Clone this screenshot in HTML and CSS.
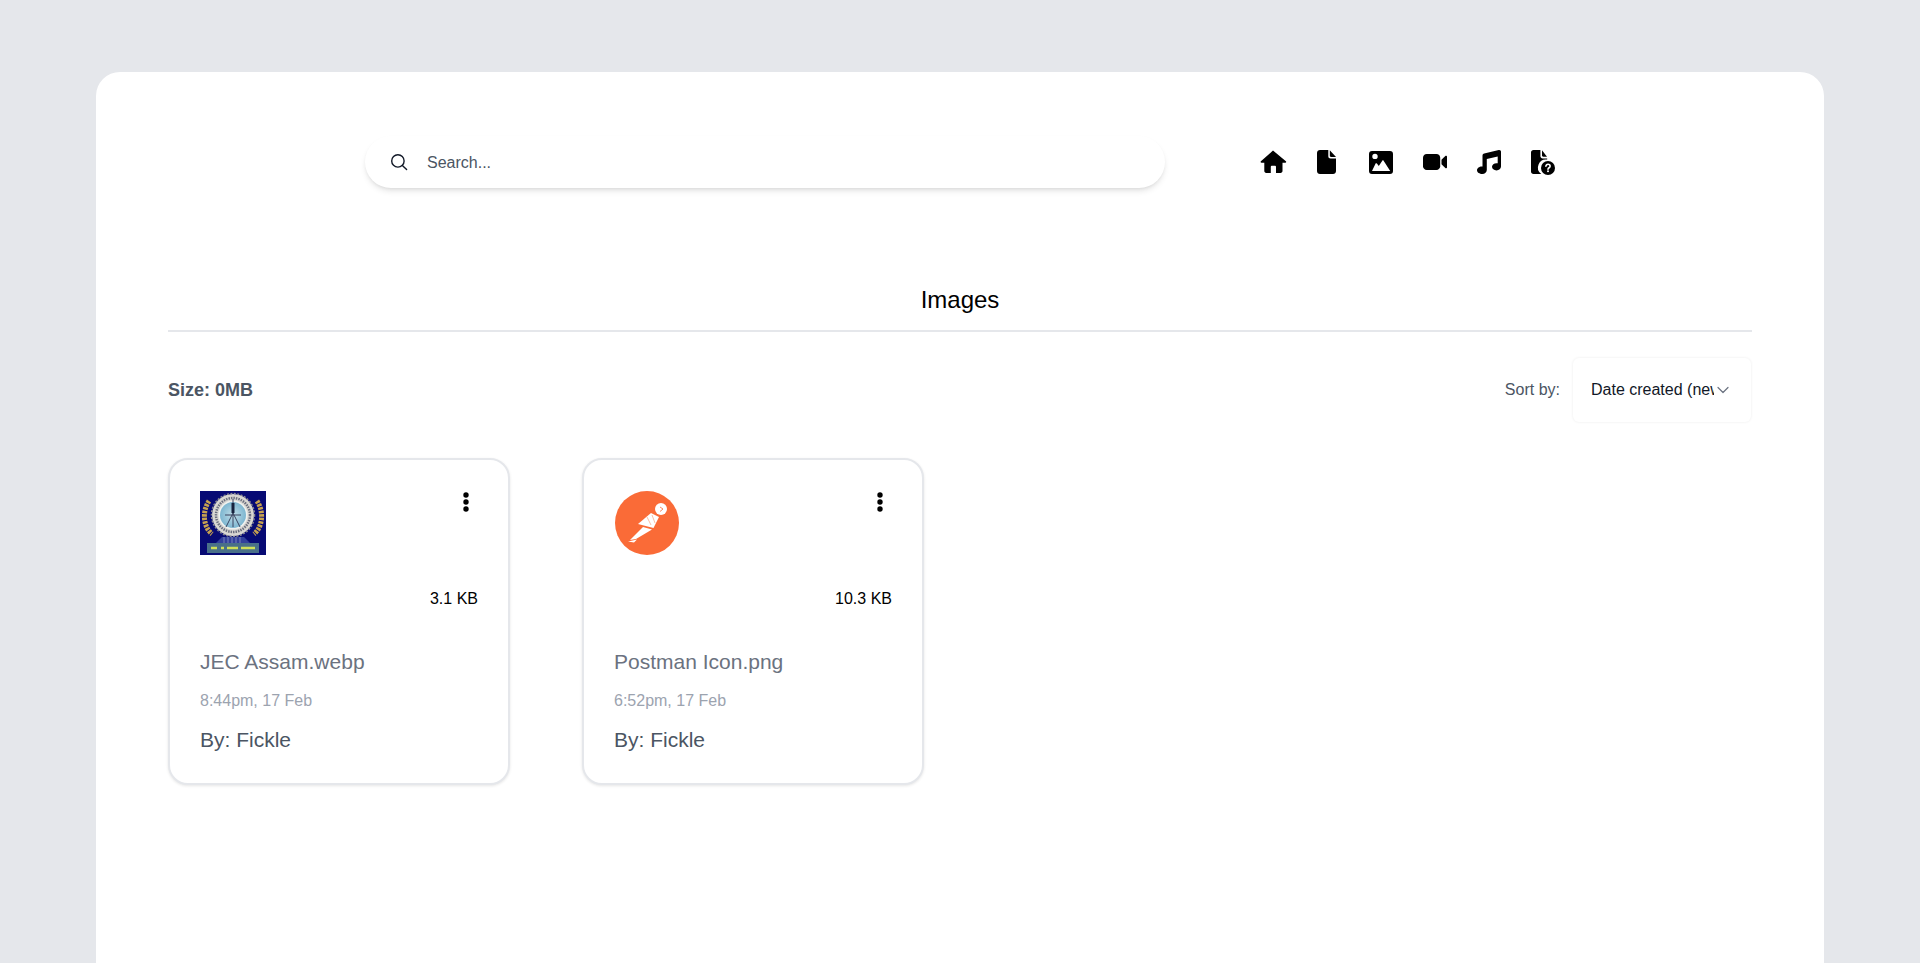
FILE: index.html
```html
<!DOCTYPE html>
<html lang="en">
<head>
<meta charset="utf-8">
<title>Images</title>
<link rel="stylesheet" href="styles.css">
</head>
<body>
<main class="panel">
  <header class="topbar">
    <label class="search">
      <svg class="search-icon" viewBox="0 0 18 18" fill="none" stroke="#111827" stroke-width="1.4" stroke-linecap="round"><circle cx="7.9" cy="7.9" r="6.2"/><path d="M12.4 12.4 16.6 16.6"/></svg>
      <span class="search-text">Search...</span>
    </label>
    <nav class="nav">
      <svg class="nav-icon" viewBox="0 0 24 24"><path d="M12 .6-.1 11.300c-.6.600-.2 1.500.6 1.500h2.800v8.300c0 1 .8 1.900 1.900 1.900h4.600v-6.300c0-.5.4-.9.900-.9h3.400c.5 0 .9.400.9.900V23h4.600c1.100 0 1.900-.9 1.900-1.900v-8.300h2.800c.8 0 1.200-.9.600-1.500Z"/></svg>
      <svg class="nav-icon" viewBox="0 0 24 24"><path d="M5 0h8.300v6.300c0 1.300 1 2.300 2.300 2.300H21v12.400c0 1.700-1.300 3-3 3H5c-1.700 0-3-1.300-3-3V3c0-1.700 1.300-3 3-3Z"/><path d="M14.800 .3 21 7H16c-.7 0-1.200-.5-1.200-1.200Z"/></svg>
      <svg class="nav-icon" viewBox="0 0 24 24"><path fill-rule="evenodd" d="M3 1h18a3 3 0 0 1 3 3v17a3 3 0 0 1-3 3H3a3 3 0 0 1-3-3V4a3 3 0 0 1 3-3ZM6 3.700a2.700 2.700 0 1 0 0 5.400 2.700 2.700 0 0 0 0-5.400ZM3 21h18.200l-6.600-10.300c-.4-.5-1-.5-1.300 0l-3.500 5.200-1.900-2.300c-.4-.4-1-.4-1.300 0Z"/></svg>
      <svg class="nav-icon" viewBox="0 0 24 24"><path d="M3.700 4h9.800c2 0 3.700 1.700 3.700 3.700v8.600c0 2-1.700 3.700-3.700 3.700H3.700C1.700 20 0 18.300 0 16.300V7.700C0 5.700 1.700 4 3.700 4Z"/><path d="M18.500 9.800 22.300 6c.7-.7 1.700-.2 1.700.7v10.600c0 .9-1 1.400-1.700.7l-3.800-3.800Z"/></svg>
      <svg class="nav-icon" viewBox="0 0 24 24"><path d="M5.500 19.600V5.700c0-1.100.7-1.900 1.700-2.100L21.800.1C23 -.2 24 .6 24 1.800V16.500c0 2.300-2 3.900-4.500 3.900s-4.500-1.500-4.500-3.600 2-3.600 4.500-3.600c.4 0 .8 0 1.200.1V6.500L9.800 9.100V20c0 2.200-1.900 4-4.500 4S0 22.500 0 20.300s2.300-3.900 4.700-3.900c.3 0 .5 0 .8.100Z"/></svg>
      <svg class="nav-icon" viewBox="0 0 24 24"><path d="M2.500 0h6.900v6.300c0 1.200 1 2.200 2.200 2.200h4.600v1.100a8 8 0 0 0-5.900 14.400H2.500C1 24 0 23 0 21.500V2.500C0 1 1 0 2.500 0Z"/><path d="M11 .3 16 6.800h-3.800c-.7 0-1.200-.5-1.200-1.200Z"/><circle cx="17" cy="18" r="7"/><path fill="none" stroke="#fff" stroke-width="1.600" stroke-linecap="round" d="M14.900 16.300c0-1.200 1-2 2.100-2s2.100.8 2.100 1.900c0 1.600-2.100 1.500-2.100 3"/><circle cx="17" cy="21.300" r="1" fill="#fff"/></svg>
    </nav>
  </header>

  <section class="content">
    <h1 class="title">Images</h1>
    <div class="toolbar">
      <strong class="size">Size: 0MB</strong>
      <div class="sort">
        <span class="sort-label">Sort by:</span>
        <div class="select">
          <span class="select-text">Date created (newest)</span>
          <svg class="chevron" viewBox="0 0 12 8" fill="none" stroke="#6b7280" stroke-width="1.200" stroke-linecap="round" stroke-linejoin="round"><path d="M1 1.500 6 6.500 11 1.500"/></svg>
        </div>
      </div>
    </div>

    <div class="cards">
      <article class="card">
        <div class="card-top">
          <svg class="thumb" viewBox="0 0 66 64">
            <defs>
              <radialGradient id="disc" cx="50%" cy="50%" r="50%"><stop offset="0" stop-color="#c0dde8"/><stop offset="1" stop-color="#7db6d0"/></radialGradient>
              <filter id="soft" x="-5%" y="-5%" width="110%" height="110%"><feGaussianBlur stdDeviation=".35"/></filter>
            </defs>
            <rect width="66" height="64" fill="#070a74"/>
            <g filter="url(#soft)">
              <path d="M9 10C2 20 3 36 12 43M57 10C64 20 63 36 54 43" fill="none" stroke="#c8a250" stroke-width="5" stroke-dasharray="2.500 1"/>
              <circle cx="33" cy="24" r="21" fill="#d9d7d2"/>
              <circle cx="33" cy="24" r="21.500" fill="none" stroke="#8b8b90" stroke-width="1.500" stroke-dasharray="2 1.500"/>
              <circle cx="33" cy="24" r="17" fill="none" stroke="#6c7080" stroke-width="2.500" stroke-dasharray="1.500 1"/>
              <circle cx="33" cy="24" r="14.500" fill="#f0f2f0"/>
              <circle cx="33" cy="24" r="13" fill="url(#disc)"/>
              <path d="M33 8V36M25 24H41M26 36 33 22 40 36" fill="none" stroke="#3a4560" stroke-width="1"/>
              <path d="M33 12V22" stroke="#16203c" stroke-width="3"/>
              <path d="M22 46H44L50 52H16Z" fill="#33409c"/>
              <path d="M24 46V52M28 46V52M32 46V52M36 46V52M40 46V52" stroke="#8c93c4" stroke-width=".8"/>
              <rect x="7" y="52" width="52" height="10" fill="#4a6f88"/>
              <path d="M11 57H17M21 57H24M27 57H38M41 57H55" stroke="#cfdf58" stroke-width="2.600"/>
            </g>
          </svg>
          <svg class="dots" viewBox="0 0 6 20"><circle cx="3" cy="3" r="2.700"/><circle cx="3" cy="10" r="2.700"/><circle cx="3" cy="17" r="2.700"/></svg>
        </div>
        <div class="file-size">3.1 KB</div>
        <div class="file-name">JEC Assam.webp</div>
        <div class="file-date">8:44pm, 17 Feb</div>
        <div class="file-owner">By: Fickle</div>
      </article>

      <article class="card">
        <div class="card-top">
          <svg class="thumb" viewBox="0 0 66 64">
            <circle cx="33" cy="32" r="32" fill="#fa6b37"/>
            <circle cx="47" cy="18" r="6" fill="#fff"/>
            <path d="M37 22 45 26 39.500 37 24 33Z" fill="#fff"/>
            <path d="M29 36 38 38.500 22 48 16 49Z" fill="#fff"/>
            <path d="M14 50.500 23 48.500 20 51.500Z" fill="#fff"/>
            <path d="M33 26 37 34M38 24 41 32" stroke="#f9a27e" stroke-width=".7"/>
            <path d="M46 16 49 18 46 20.500" fill="none" stroke="#fa6b37" stroke-width=".8"/>
          </svg>
          <svg class="dots" viewBox="0 0 6 20"><circle cx="3" cy="3" r="2.700"/><circle cx="3" cy="10" r="2.700"/><circle cx="3" cy="17" r="2.700"/></svg>
        </div>
        <div class="file-size">10.3 KB</div>
        <div class="file-name">Postman Icon.png</div>
        <div class="file-date">6:52pm, 17 Feb</div>
        <div class="file-owner">By: Fickle</div>
      </article>
    </div>
  </section>
</main>
</body>
</html>
```

FILE: styles.css
```css
* { box-sizing: border-box; margin: 0; padding: 0; }
html, body { height: 963px; overflow: hidden; }
body {
  background: #e5e7eb;
  padding: 72px 96px 0;
  font-family: "Liberation Sans", Arial, sans-serif;
}
.panel {
  background: #fff;
  border-radius: 24px 24px 0 0;
  height: 891px;
  padding: 64px 72px 0;
}
.topbar {
  display: flex;
  justify-content: center;
  align-items: center;
  gap: 96px;
}
.search {
  width: 800px;
  height: 52px;
  display: flex;
  align-items: center;
  gap: 19px;
  padding-left: 25px;
  border-radius: 26px;
  background: #fff;
  box-shadow: 0 4px 6px -1px rgba(0,0,0,.1), 0 2px 4px -2px rgba(0,0,0,.1);
}
.search-icon { width: 18px; height: 18px; flex: none; }
.search-text { padding-top: 2px; font-size: 16px; color: #4b5563; }
.nav { display: flex; gap: 30px; }
.nav-icon { width: 24px; height: 24px; flex: none; fill: #000; overflow: visible; }
.content { margin-top: 96px; }
.title {
  text-align: center;
  font-size: 24px;
  font-weight: 400;
  line-height: 32px;
  color: #000;
  padding-bottom: 14px;
  border-bottom: 2px solid #e5e7eb;
}
.toolbar {
  display: flex;
  justify-content: space-between;
  align-items: center;
  margin-top: 26px;
}
.size { font-size: 18px; font-weight: 700; color: #4b5563; }
.sort { display: flex; align-items: center; gap: 13px; margin-right: 1px; }
.sort-label { font-size: 16px; color: #4b5563; }
.select {
  width: 178px;
  height: 64px;
  display: flex;
  align-items: center;
  justify-content: space-between;
  padding: 0 22px 0 18px;
  border-radius: 6px;
  background: #fff;
  box-shadow: 0 0 3px rgba(0,0,0,.08);
}
.select-text {
  width: 123px;
  overflow: hidden;
  white-space: nowrap;
  font-size: 16px;
  color: #111827;
}
.chevron { width: 12px; height: 8px; flex: none; }
.cards { display: flex; gap: 72px; margin-top: 36px; }
.card {
  width: 342px;
  height: 327px;
  padding: 31px 30px 0;
  border: 2px solid #e5e7eb;
  border-radius: 20px;
  background: #fff;
  box-shadow: 0 1px 3px rgba(0,0,0,.1);
}
.card-top {
  display: flex;
  justify-content: space-between;
  align-items: flex-start;
  height: 64px;
}
.thumb { width: 66px; height: 64px; display: block; }
.dots { width: 6px; height: 20px; margin: 1px 9px 0 0; fill: #000; }
.file-size {
  margin-top: 32px;
  text-align: right;
  font-size: 16px;
  line-height: 24px;
  color: #000;
}
.file-name {
  margin-top: 37px;
  font-size: 21px;
  line-height: 28px;
  color: #6b7280;
}
.file-date {
  margin-top: 13px;
  font-size: 16px;
  line-height: 24px;
  color: #9ca3af;
}
.file-owner {
  margin-top: 13px;
  font-size: 21px;
  line-height: 28px;
  color: #4b5563;
}
```
